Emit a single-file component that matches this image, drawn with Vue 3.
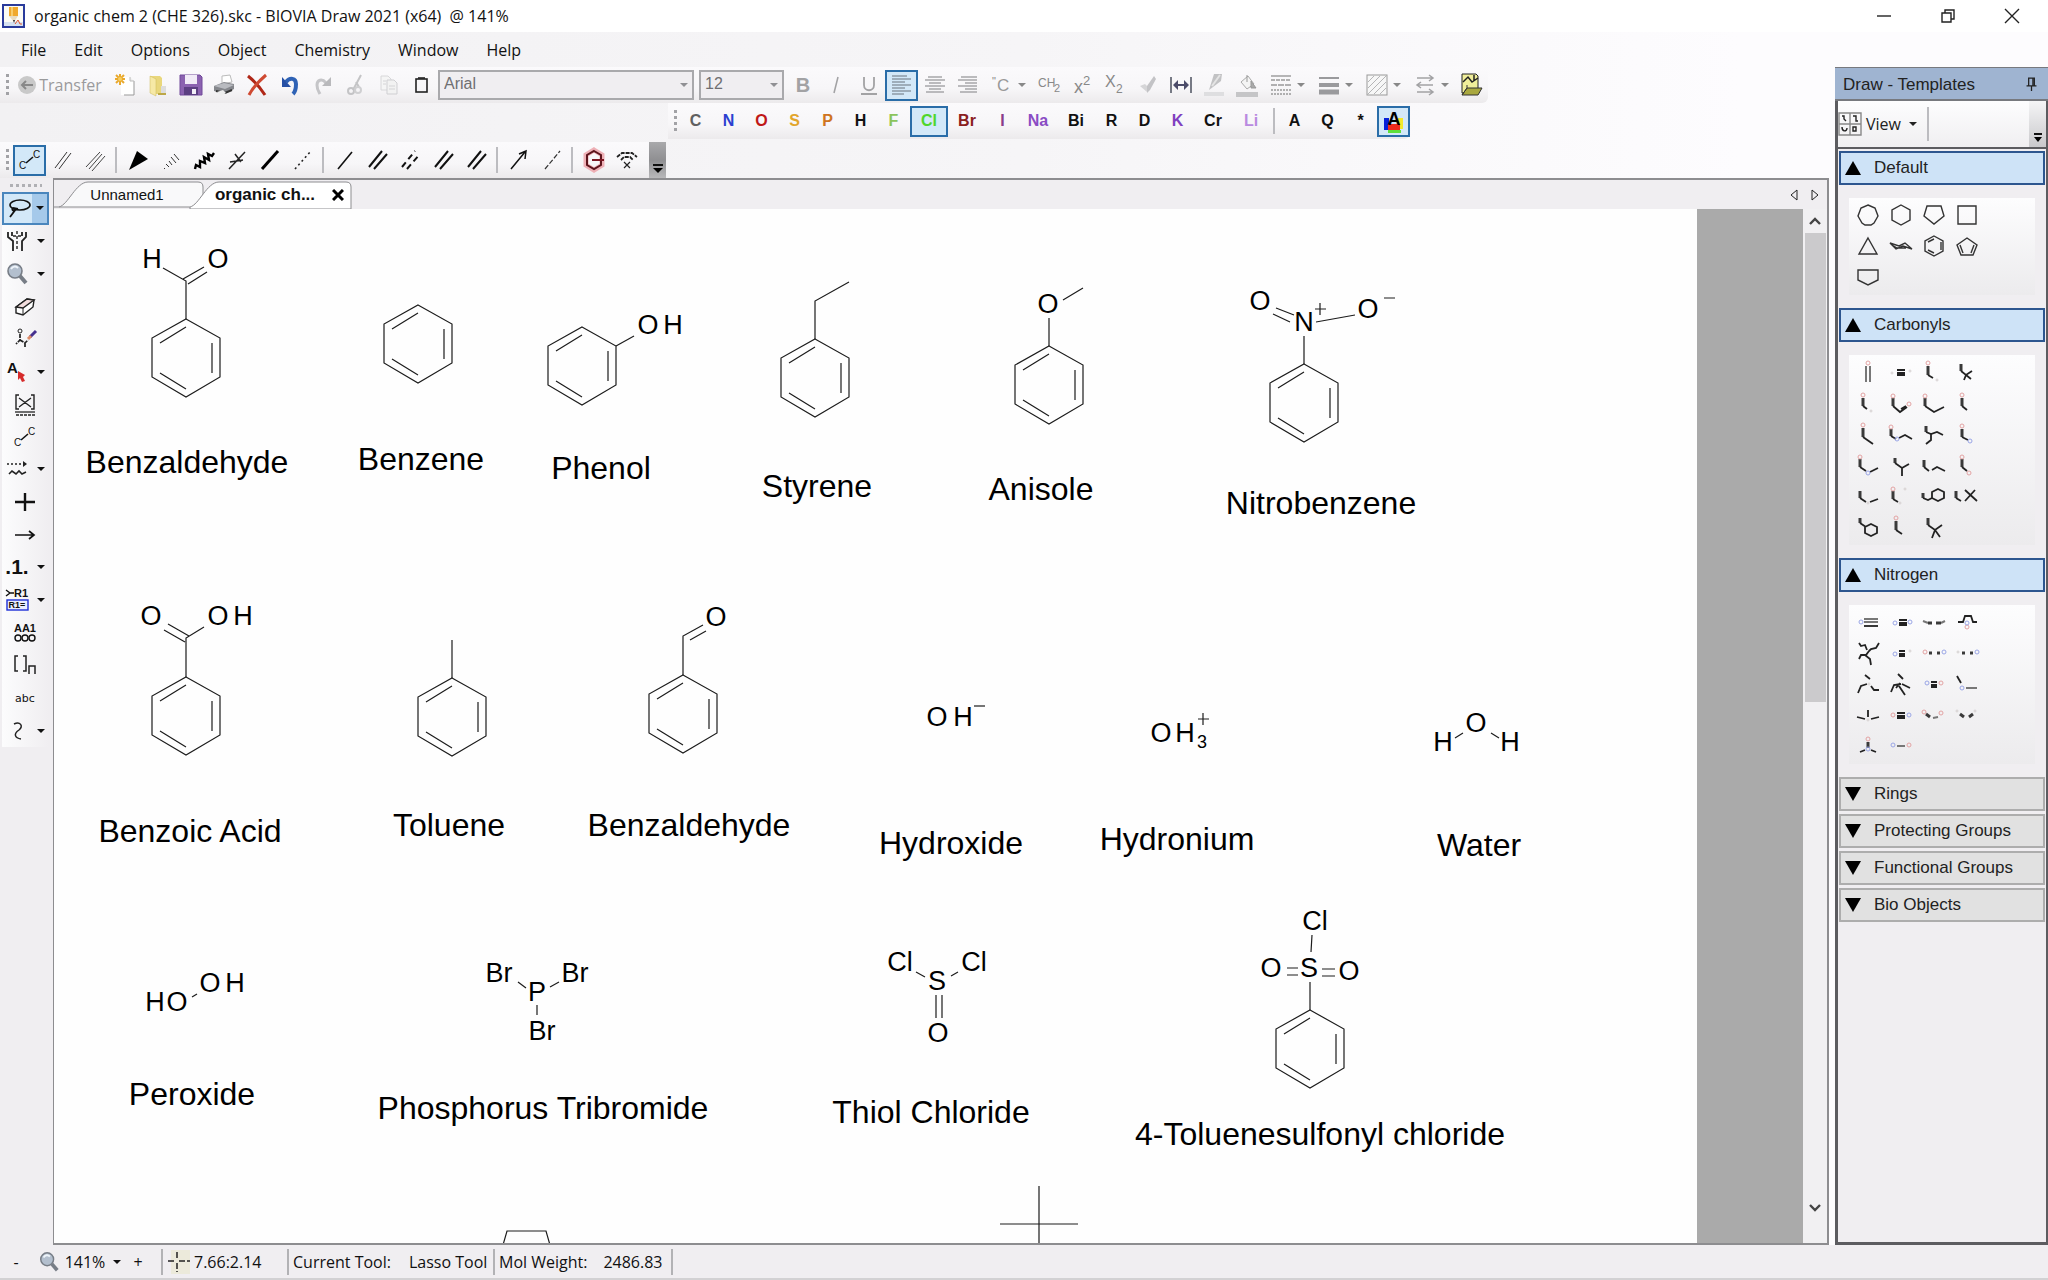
<script setup>
const menus = ['File', 'Edit', 'Options', 'Object', 'Chemistry', 'Window', 'Help']

const arrowDown = '<path d="M0 0H8L4 4Z" fill="currentColor"/>'

const icons = {
  app: '<rect x="1" y="1" width="21" height="22" fill="#fbfbf4" stroke="#2a3b9b" stroke-width="2"/><path d="M2 18H21V22H2Z" fill="#d6e2f0"/><path d="M7 3H16V12H7Z" fill="#f0a92c"/><path d="M9 3H11V12H9Z" fill="#f8cd6c"/><path d="M7 12H16L12 18Z" fill="#e8dcc0"/><path d="M11 16L13 16L12 19Z" fill="#333"/><path d="M13 20L16 16L18 20H20" stroke="#e0562e" fill="none"/>',
  transfer: '<circle cx="12" cy="12" r="9" fill="#c9c9c9"/><path d="M18 12H7M11 8L7 12L11 16" stroke="#888" stroke-width="2" fill="none"/>',
  new: '<path d="M8 4H17L21 8V22H8Z" fill="#fff"/><path d="M21 8V22H11" stroke="#999" fill="none"/><path d="M17 4V8H21" stroke="#bbb" fill="#eee"/><path d="M7 1V12M2 6H12M3 2L11 10M11 2L3 10" stroke="#e9a92e" stroke-width="2"/><circle cx="7" cy="6" r="2" fill="#f7cf63"/>',
  open: '<path d="M4 3H14L16 5V21H9L4 19Z" fill="#e9d77c"/><path d="M4 3L10 6V23L4 20Z" fill="#f6e9a6" stroke="#cdb85a" stroke-width=".5"/><path d="M15 13H20V20H15Z" fill="#ddd"/><path d="M12 21H20" stroke="#bda848" stroke-width="2"/>',
  save: '<path d="M1 2H21L23 4V22H1Z" fill="#8b62b0" stroke="#70489a"/><rect x="6" y="2" width="12" height="9" fill="#f1ebf7"/><rect x="5" y="14" width="14" height="8" fill="#5c3f82"/><rect x="13" y="16" width="4" height="5" fill="#f3f0f8"/>',
  print: '<path d="M10 3L18 2L20 9L10 11Z" fill="#fff" stroke="#bbb"/><path d="M2 13L12 9L22 11V16L13 21L2 18Z" fill="#85878c"/><path d="M2 13L12 10L22 12L13 16Z" fill="#b9bbc0"/><path d="M4 18L13 20L20 17" stroke="#333" stroke-width="2" fill="none"/><path d="M5 19L11 17L14 20L9 23Z" fill="#eee"/>',
  delete: '<path d="M3 3C8 7 15 14 20 22" stroke="#b02717" stroke-width="3" fill="none"/><path d="M21 2C14 8 8 14 4 22" stroke="#cf4a32" stroke-width="3" fill="none"/>',
  undo: '<path d="M8 9C12 4 18 5 18 11C18 16 17 19 15 21" stroke="#2f62b5" stroke-width="4" fill="none"/><path d="M4 4V14H13Z" fill="#2650a5"/>',
  redo: '<path d="M15 10C11 5 6 7 6 12C6 17 8 19 9 21" stroke="#c5c5c8" stroke-width="3" fill="none"/><path d="M20 4V13H11Z" fill="#b9b9bc"/>',
  cut: '<path d="M17 2L9 17M12 9L15 14" stroke="#c4c4c6" stroke-width="2"/><circle cx="7" cy="18" r="3" fill="none" stroke="#c4c4c6" stroke-width="2"/><circle cx="14" cy="17" r="3" fill="none" stroke="#cfcfd1" stroke-width="2"/>',
  copy: '<path d="M4 3H11L14 6V17H4Z" fill="#f5f5f5" stroke="#d8d8da"/><path d="M10 7H17L20 10V21H10Z" fill="#f2f2f2" stroke="#cfcfd2"/><path d="M12 13H18M12 16H18M6 8H9M6 11H9" stroke="#d4d4d6"/>',
  paste: '<rect x="6" y="6" width="11" height="13" fill="none" stroke="#222" stroke-width="1.6"/><path d="M8 5H15" stroke="#222" stroke-width="1.6"/>',
  bold: '<text x="12" y="19" font-size="20" font-weight="bold" text-anchor="middle" fill="#a2a2a4">B</text>',
  italic: '<path d="M14 4L10 20" stroke="#a2a2a4" stroke-width="1.5"/>',
  underline: '<path d="M7 4V12C7 19 17 19 17 12V4M4 21H20" stroke="#a2a2a4" stroke-width="1.8" fill="none"/>',
  left: '<path d="M2 3H17M2 6H21M2 9H15M2 12H21M2 15H15M2 18H21M2 21H14" stroke="#8d99a5" stroke-width="1.4"/>',
  center: '<path d="M5 4H19M2 7H22M6 10H18M2 13H22M6 16H18M3 19H21" stroke="#a7a7a9" stroke-width="1.4"/>',
  right: '<path d="M5 4H21M2 7H21M9 10H21M2 13H21M9 16H21M4 19H21" stroke="#a7a7a9" stroke-width="1.4"/>',
  degree: '<text x="2" y="12" font-size="11" fill="#888">"</text><text x="7" y="18" font-size="17" fill="#999">C</text>',
  ch2: '<text x="1" y="14" font-size="12" fill="#888">CH</text><text x="17" y="19" font-size="11" fill="#888">2</text>',
  sup: '<text x="4" y="20" font-size="18" fill="#888">x</text><text x="13" y="12" font-size="13" fill="#888">2</text>',
  sub: '<text x="2" y="14" font-size="16" fill="#888">X</text><text x="13" y="20" font-size="12" fill="#888">2</text>',
  brush: '<path d="M4 13L9 11L13 15L11 19Z" fill="#d5d5d7"/><path d="M11 13L18 3L20 6L14 17L11 20Z" fill="#c3c3c6"/>',
  width: '<path d="M2 4V20M22 4V20" stroke="#777a85" stroke-width="2"/><path d="M5 12H19" stroke="#4c4c6a" stroke-width="2"/><path d="M9 7V17L4 12ZM15 7V17L20 12Z" fill="#4c4c6a"/>',
  pen: '<path d="M12 1H20L19 8L11 14L7 17Z" fill="#c2c2c4"/><path d="M18 2L10 13" stroke="#e4e4e4" stroke-width="2"/><rect x="2" y="19" width="20" height="4" fill="#dedee0"/>',
  fill: '<path d="M6 9L13 3L19 11L12 16Z" fill="#f4f4f4" stroke="#aaa"/><path d="M12 2V9M16 8L21 15H16Z" stroke="#999" fill="#aaa"/><rect x="1" y="19" width="22" height="5" fill="#c5c5c7"/>',
  dashes: '<path d="M2 3H22" stroke="#999" stroke-width="1.4"/><path d="M2 7H22" stroke="#999" stroke-width="1.4" stroke-dasharray="4 1"/><path d="M2 12H22" stroke="#999" stroke-width="1.6" stroke-dasharray="6 1"/><path d="M2 17H22M2 21H22" stroke="#999" stroke-width="1.6" stroke-dasharray="2 1"/>',
  weights: '<path d="M2 5H22" stroke="#9a9a9d" stroke-width="2"/><path d="M2 12H22" stroke="#9a9a9d" stroke-width="4"/><path d="M2 19H22" stroke="#9a9a9d" stroke-width="5"/>',
  hatch: '<rect x="2" y="2" width="20" height="20" fill="#f7f7f7" stroke="#999"/><path d="M3 9L9 3M3 15L15 3M3 21L21 3M9 21L21 9M15 21L21 15" stroke="#b5b5b7"/>',
  arrows: '<path d="M4 5H20M16 2L20 5L16 8M4 12H20M4 19H20M16 16L20 19L16 22M8 9L4 12L8 15" stroke="#a2a2a4" stroke-width="1.5" fill="none"/>',
  folder: '<path d="M2 1H16L18 3V20H2Z" fill="#f0ee9a" stroke="#222"/><path d="M3 9L8 4L12 9L18 5M14 2V8" stroke="#222" fill="none" stroke-width="1.5"/><path d="M7 15H22L18 22H2Z" fill="#a9a83f" stroke="#333"/><path d="M2 22L7 15V12" stroke="#333" fill="none"/>',
  bond: '<path d="M8 15L15 9" stroke="#111" stroke-width="1.6"/><text x="1" y="21" font-size="10" fill="#111">C</text><text x="15" y="10" font-size="10" fill="#111">C</text>',
  double: '<path d="M4 20L16 4M8 21L20 5" stroke="#333"/>',
  triple: '<path d="M2 19L16 4M5 21L18 6M8 23L21 8" stroke="#444"/>',
  wedge: '<path d="M3 22L11 3L22 11Z" fill="#000"/>',
  hash: '<path d="M5 20L6 21M7 16L10 19M10 13L13 17M12 9L17 15M15 6L20 12" stroke="#333"/>',
  wavy: '<path d="M3 21L4 17L8 19L8 13L13 15L12 9L17 12L16 6L20 8L22 5" stroke="#000" stroke-width="2.4" fill="none"/>',
  either: '<path d="M4 21L20 4M10 6L16 14M5 14L18 12" stroke="#222" stroke-width="1.5"/>',
  boldbond: '<path d="M4 21L20 3" stroke="#000" stroke-width="3"/>',
  dotted: '<path d="M4 21L20 3" stroke="#222" stroke-width="1.6" stroke-dasharray="2 3"/>',
  single: '<path d="M5 21L19 4" stroke="#111" stroke-width="1.6"/>',
  dbl: '<path d="M3 19L16 3M8 21L21 6" stroke="#111" stroke-width="2"/>',
  dbldash: '<path d="M3 19L16 3M8 21L21 6" stroke="#111" stroke-width="2" stroke-dasharray="6 4"/>',
  dative: '<path d="M4 21L18 4M12 6L19 3L18 11" stroke="#111" stroke-width="1.5" fill="none"/>',
  hbond: '<path d="M5 21L20 3" stroke="#333" stroke-width="1.2" stroke-dasharray="5 2"/>',
  ring: '<path d="M12 2L20 7V17L12 22L4 17V7Z" fill="none" stroke="#eeb0b6" stroke-width="5"/><path d="M12 3L19 7V17L12 21L5 17V7Z" fill="none" stroke="#5c141c" stroke-width="2"/><path d="M10 12H22" stroke="#7c1722" stroke-width="2"/>',
  scan: '<path d="M2 9L7 5H17L22 9M6 12L9 9H15L18 12" stroke="#222" stroke-width="1.8" fill="none" stroke-dasharray="4 1"/><path d="M9 14L15 20M15 14L9 20" stroke="#222" stroke-width="1.2"/>',
  colorA: '<path d="M2 9H7V21H2Z" fill="#0620d8"/><path d="M16 9H21V20H16Z" fill="#f4e82a"/><path d="M6 15H18V22H6Z" fill="#ee2b1c"/><path d="M6 21H19V24H6Z" fill="#5fe03a"/><text x="12" y="16" font-size="18" font-weight="bold" text-anchor="middle" fill="#000">A</text>',
  lasso: '<ellipse cx="14" cy="9" rx="10" ry="5" fill="none" stroke="#111" stroke-width="1.6"/><path d="M7 12C5 14 8 16 10 13L4 21M7 12L12 13" fill="none" stroke="#111" stroke-width="1.8"/>',
  flask: '<path d="M3 3V8L8 12V22M7 3V7M21 3V8L17 12V22M17 3V7" stroke="#222" stroke-width="1.8" fill="none"/><path d="M12 2V22" stroke="#222" stroke-width="1.4" stroke-dasharray="3 2"/><path d="M8 7H16" stroke="#222" stroke-width="1.6" stroke-dasharray="3 2"/>',
  magnify: '<circle cx="10" cy="9" r="7" fill="#b3bfce" stroke="#777d86" stroke-width="1.6"/><path d="M6 7C8 4 11 4 13 6" stroke="#eef4fa" stroke-width="2" fill="none"/><path d="M15 14L21 21" stroke="#777d86" stroke-width="4"/>',
  eraser: '<path d="M3 13L14 5L21 6L20 13L10 21L3 19Z" fill="#fff" stroke="#222" stroke-width="1.4"/><path d="M3 13L14 5L21 6L10 14Z" fill="#f3dede" stroke="#222" stroke-width="1.4"/><path d="M10 14V21" stroke="#222"/>',
  paint: '<circle cx="7" cy="4" r="2" fill="none" stroke="#222"/><path d="M7 7V13L3 17M7 13L12 16L15 13M12 16V21" stroke="#222" stroke-width="1.7" stroke-dasharray="4 1" fill="none"/><path d="M17 10L23 4" stroke="#46308f" stroke-width="3"/><path d="M15 12L18 9" stroke="#dd8a66" stroke-width="3"/>',
  label: '<text x="2" y="13" font-size="15" font-weight="bold" fill="#111">A</text><path d="M13 11L20 15L18 17L20 21L17 22L15 18L13 20Z" fill="#d62b2b"/>',
  box: '<path d="M6 3H3V17H6M18 3H21V17H18M6 6L18 15M18 6L6 15" stroke="#222" stroke-width="1.4" fill="none"/><path d="M2 20H22" stroke="#222" stroke-width="1.3"/><path d="M3 23H22" stroke="#222" stroke-width="1.6" stroke-dasharray="3 1"/>',
  reaction: '<path d="M2 7H19" stroke="#222" stroke-width="1.6" stroke-dasharray="2 2"/><path d="M18 4L22 7L18 10Z" fill="#222"/><path d="M4 17L7 14L11 17L14 14L17 17L21 15" stroke="#222" stroke-width="1.6" fill="none"/>',
  plus: '<path d="M12 3V21M2 12H22" stroke="#111" stroke-width="2.4"/>',
  arrow: '<path d="M2 12H21M16 8L21 12L16 16" stroke="#111" stroke-width="1.7" fill="none"/>',
  one: '<text x="12" y="19" font-size="21" font-weight="bold" text-anchor="middle" fill="#111">.1.</text>',
  rgroup: '<text x="23" y="9" font-size="11" font-weight="bold" text-anchor="end" fill="#111">R1</text><path d="M1 2L5 5L1 8M5 5H9" stroke="#111" fill="none" stroke-width="1.4"/><rect x="2" y="12" width="21" height="10" fill="#e8ecff" stroke="#1e2fd8" stroke-width="1.4"/><text x="12" y="20" font-size="9" font-weight="bold" text-anchor="middle" fill="#111">R1=</text>',
  aa: '<text x="12" y="11" font-size="11" font-weight="bold" text-anchor="middle" fill="#111">AA1</text><g fill="none" stroke="#111" stroke-width="1.4"><circle cx="5" cy="17" r="3"/><circle cx="12" cy="17" r="3"/><circle cx="19" cy="17" r="3"/></g>',
  bracket: '<path d="M5 3H2V18H5M10 3H13V18H10M16 21V13H22V21" stroke="#222" stroke-width="1.5" fill="none"/>',
  abc: '<text x="12" y="16" font-size="11" text-anchor="middle" font-family="DejaVu Sans, sans-serif" fill="#111">abc</text>',
  curve: '<path d="M9 5C15 2 19 7 14 11C8 15 10 19 16 20" stroke="#222" stroke-width="1.5" fill="none"/>',
  pin: '<path d="M8 3H16V14H8ZM14 3V14M5 14H19M12 14V21" stroke="#222" stroke-width="1.8" fill="none"/>',
  view: '<path d="M1 1H23V23H1ZM12 1V23M1 12H23" stroke="#888" fill="none" stroke-width="1.4"/><path d="M4 4H6V7L8 9M15 4H18V9H20M4 15C4 20 9 20 9 16M15 15H18V19H15Z" stroke="#222" fill="none" stroke-width="1.4"/>',
  cross: '<rect x="4" y="0" width="19" height="24" fill="#eceadb"/><path d="M10 2V9M10 13V22M1 11H8M12 11H23" stroke="#222" stroke-width="1.5" stroke-dasharray="6 2"/>',
}

const fileTools = ['new', 'open', 'save', 'print', 'delete', 'undo', 'redo', 'cut', 'copy', 'paste']
const formatTools = [
  { i: 'bold' }, { i: 'italic' }, { i: 'underline' }, { i: 'left', on: true }, { i: 'center' }, { i: 'right' },
  { i: 'degree', drop: true }, { i: 'ch2' }, { i: 'sup' }, { i: 'sub' }, { i: 'brush' }, { i: 'width' }, { i: 'pen' }, { i: 'fill' },
  { i: 'dashes', drop: true }, { i: 'weights', drop: true }, { i: 'hatch', drop: true }, { i: 'arrows', drop: true }, { i: 'folder' },
]
const elements = [
  ['C', '#606060'], ['N', '#2b3fd0'], ['O', '#c01818'], ['S', '#e2a52c'], ['P', '#cf7420'], ['H', '#111'], ['F', '#8cc45c'],
  ['Cl', '#4fd62c', true], ['Br', '#8a2020'], ['I', '#8a3c8a'], ['Na', '#8a4cc4'], ['Bi', '#111'], ['R', '#111'], ['D', '#111'],
  ['K', '#8040c0'], ['Cr', '#111'], ['Li', '#b98ae0'],
]
const queryAtoms = ['A', 'Q', '*']
const bondTools = [
  ['bond', 'double', 'triple'],
  ['wedge', 'hash', 'wavy', 'either', 'boldbond', 'dotted'],
  ['single', 'dbl', 'dbldash', 'dbl', 'dbl'],
  ['dative', 'hbond'],
  ['ring', 'scan'],
]
const sideTools = [
  { i: 'lasso', drop: true, on: true }, { i: 'flask', drop: true }, { i: 'magnify', drop: true }, { i: 'eraser' }, { i: 'paint' },
  { i: 'label', drop: true }, { i: 'box' }, { i: 'bond' }, { i: 'reaction', drop: true }, { i: 'plus' }, { i: 'arrow' },
  { i: 'one', drop: true }, { i: 'rgroup', drop: true }, { i: 'aa' }, { i: 'bracket' }, { i: 'abc' }, { i: 'curve', drop: true },
]

// Template glyphs: t = heavy bond, k = thin bond, g = faint bond; r / b / f = red, blue and faint atoms.
const hex = (x, y) => `M${x} ${y - 6}L${x + 6} ${y - 3}V${y + 3}L${x} ${y + 6}L${x - 6} ${y + 3}V${y - 3}Z`
const bars = (a, b) => `M${a} 13H${b}M${a} 16H${b}M${a} 18H${b}`
const groups = [
  {
    name: 'Default', items: [
      { o: 'M16 5L23 8L26 16L22 23L19 25H13L10 23L6 16L9 8Z' },
      { o: 'M16 5L25 10V20L16 25L7 20V10Z' },
      { o: 'M9 6H23L26 16L16 24L6 16Z' },
      { o: 'M7 6H25V24H7Z' },
      { o: 'M16 7L25 23H7Z' },
      { o: 'M5 12L14 15L20 12L27 18L18 15L11 18ZM7 14L12 17L21 17' },
      { o: 'M16 5L25 10V20L16 25L7 20V10ZM10 11L16 8M23 11V19M10 19L16 22' },
      { o: 'M16 7L26 14L22 24H10L6 14ZM9 14L12 22M23 14L20 22' },
      { o: 'M6 8H26V18L16 23L6 18Z' },
    ],
  },
  {
    name: 'Carbonyls', items: [
      { g: 'M14 9V25M18 9V25', r: [[16, 6]] },
      { k: bars(12, 20), f: [[7, 16], [25, 14]] },
      { t: 'M10 9V18', k: 'M10 18L15 21', r: [[10, 6]], f: [[19, 23]] },
      { t: 'M10 7V14', k: 'M10 14L15 18L21 14M15 18L13 23M15 18L20 22' },
      { t: 'M11 10V18', k: 'M11 18L15 21', r: [[11, 7]], f: [[19, 23]] },
      { t: 'M8 10V18', k: 'M8 18L15 24L22 19M16 21L21 18', r: [[8, 8], [24, 16]] },
      { t: 'M7 10V18', k: 'M7 18L16 24L26 19', r: [[7, 8]] },
      { t: 'M11 10V18', k: 'M11 18L16 22', r: [[11, 7]] },
      { t: 'M11 9V18', k: 'M11 18L21 25', r: [[11, 6]] },
      { t: 'M6 10V17', k: 'M6 17L11 20M14 19L20 16L27 20', r: [[6, 8]], b: [[12, 20]] },
      { t: 'M8 7V13', k: 'M8 13L13 15L19 13L25 16M13 15V21L8 25' },
      { t: 'M11 10V18', k: 'M11 18L17 21', r: [[11, 7]], b: [[19, 22]] },
      { t: 'M8 9V17', k: 'M8 17L14 21M18 22L26 18', r: [[8, 7]], b: [[16, 23]] },
      { t: 'M10 8V13', k: 'M10 13L17 18L24 14M17 18V26' },
      { t: 'M6 10V17', k: 'M6 17L11 21M14 20L19 17L27 21' },
      { t: 'M11 9V17', k: 'M11 17L16 21', r: [[11, 7], [18, 23]] },
      { t: 'M8 10V17', k: 'M8 17L14 21M18 21L26 18', f: [[16, 22]] },
      { t: 'M8 10V18', k: 'M8 18L13 21', r: [[8, 8]], f: [[15, 22], [20, 8]] },
      { t: 'M5 12V17', k: 'M5 17L10 19L14 17' + hex(20, 14) },
      { t: 'M5 10V17', k: 'M5 17L10 20M14 9L26 20M24 9L14 20' },
      { t: 'M8 6V11', k: 'M8 11L14 15' + hex(19, 18) },
      { t: 'M11 9V18', k: 'M11 18L17 22', r: [[11, 6]] },
      { t: 'M10 6V13', k: 'M10 13L17 18L24 13M17 18L14 26M17 18L22 25' },
    ],
  },
  {
    name: 'Nitrogen', items: [
      { k: 'M12 19H26', g: 'M12 12H26M12 15H26', b: [[9, 15]] },
      { k: bars(14, 22), b: [[10, 16], [25, 15]] },
      { t: 'M10 16H14M18 16H23', g: 'M5 14L10 16M23 16L27 14' },
      { k: 'M7 15H12L14 9H20L22 15H26', b: [[16, 16]], r: [[16, 20]] },
      { k: 'M7 5L9 8L13 7L15 12M17 13L19 11L24 10L27 5M17 13L14 17L9 17L7 21M13 17L18 21L19 27' },
      { k: bars(14, 20), b: [[10, 16]], f: [[25, 13]] },
      { t: 'M11 15H14M19 15H22', r: [[7, 14]], b: [[26, 14]] },
      { t: 'M11 15H14M19 15H22', f: [[7, 14]], b: [[26, 14]] },
      { k: 'M13 6L18 10M15 15L9 17L6 24M19 17L22 21L27 21', f: [[17, 15]] },
      { k: 'M13 5L18 10M16 15L9 16L6 23M17 15L25 19M14 17L20 26M11 19L15 14' },
      { k: bars(13, 19), b: [[9, 14]], r: [[23, 14]] },
      { k: 'M6 7L10 14', g: 'M15 19H26', b: [[11, 19]] },
      { k: 'M16 10V17M5 17L13 19M19 19L27 17', f: [[16, 20]] },
      { k: bars(12, 20), r: [[8, 15]], b: [[24, 15]] },
      { t: 'M8 14L12 17', g: 'M15 18L20 17', r: [[6, 12], [23, 13]] },
      { t: 'M9 14L13 17M18 17L22 14', f: [[6, 11], [24, 11]] },
      { t: 'M16 11V17', k: 'M13 19L8 21M19 19L24 21', r: [[16, 8]], b: [[16, 18]] },
      { g: 'M12 15H20', b: [[8, 14]], r: [[24, 14]] },
    ],
  },
  { name: 'Rings' }, { name: 'Protecting Groups' }, { name: 'Functional Groups' }, { name: 'Bio Objects' },
]

const ringPath = 'M0-39L34-20V19L0 39L-34 19V-20ZM26-15V15M-26-15L0-31M-26 15L0 31'

// Molecules on the sheet: ring centres, bond paths, atom symbols [text, x, baseline] and caption.
const molecules = [
  { ring: [132, 149], bonds: 'M132 110V72L109 59M129 70L150 58M134 75L153 63', atoms: [['H', 98, 59], ['O', 164, 59]], name: ['Benzaldehyde', 133, 264] },
  { ring: [364, 135], name: ['Benzene', 367, 261] },
  { ring: [528, 157], bonds: 'M562 137L580 127', atoms: [['O', 594, 125], ['H', 619, 125]], name: ['Phenol', 547, 270] },
  { ring: [761, 169], bonds: 'M761 130V92L795 73', name: ['Styrene', 763, 288] },
  { ring: [995, 176], bonds: 'M995 137V109M1009 91L1029 79', atoms: [['O', 994, 104]], name: ['Anisole', 987, 291] },
  { ring: [1250, 194], bonds: 'M1250 155V127M1222 99L1240 106M1219 105L1236 113M1262 113L1301 106M1261 100H1272M1266 94V106M1330 89H1341', atoms: [['O', 1206, 101], ['N', 1250, 122], ['O', 1314, 109]], name: ['Nitrobenzene', 1267, 305] },
  { ring: [132, 507], bonds: 'M132 468V429L150 418M114 415L135 427M110 421L131 433', atoms: [['O', 97, 416], ['O', 164, 416], ['H', 189, 416]], name: ['Benzoic Acid', 136, 633] },
  { ring: [398, 508], bonds: 'M398 469V431', name: ['Toluene', 395, 627] },
  { ring: [629, 505], bonds: 'M629 466V427L649 416M636 431L652 422', atoms: [['O', 662, 417]], name: ['Benzaldehyde', 635, 627] },
  { bonds: 'M920 497H931', atoms: [['O', 883, 517], ['H', 909, 517]], name: ['Hydroxide', 897, 645] },
  { bonds: 'M1144 510H1155M1149 504V516', atoms: [['O', 1107, 533], ['H', 1131, 533], ['3', 1148, 539, true]], name: ['Hydronium', 1123, 641] },
  { bonds: 'M1401 529L1409 524M1437 524L1445 529', atoms: [['H', 1389, 542], ['O', 1422, 523], ['H', 1456, 542]], name: ['Water', 1425, 647] },
  { bonds: 'M138 788L143 785', atoms: [['H', 101, 802], ['O', 123, 802], ['O', 156, 783], ['H', 181, 783]], name: ['Peroxide', 138, 896] },
  { bonds: 'M464 773L472 779M496 778L505 773M483 796V806', atoms: [['Br', 445, 773], ['Br', 521, 773], ['P', 483, 792], ['Br', 488, 831]], name: ['Phosphorus Tribromide', 489, 910] },
  { bonds: 'M862 763L871 768M897 767L904 763M882 786V809M888 786V809', atoms: [['Cl', 846, 762], ['Cl', 920, 762], ['S', 883, 781], ['O', 884, 833]], name: ['Thiol Chloride', 877, 914] },
  { ring: [1256, 840], bonds: 'M1256 801V773M1258 726L1257 743M1233 759H1244M1233 766H1244M1268 760H1281M1268 767H1281', atoms: [['Cl', 1261, 721], ['S', 1255, 768], ['O', 1217, 768], ['O', 1295, 771]], name: ['4-Toluenesulfonyl chloride', 1266, 936] },
]
</script>

<template>
  <div class="app">
    <header class="titlebar">
      <svg class="ico" viewBox="0 0 24 24" v-html="icons.app"></svg>
      <h1>organic chem 2 (CHE 326).skc - BIOVIA Draw 2021 (x64)&nbsp; @ 141%</h1>
      <div class="winbtns">
        <button aria-label="Minimize"><svg width="16" height="16"><path d="M1 8H15" /></svg></button>
        <button aria-label="Restore"><svg width="16" height="16"><path d="M2 5H11V14H2ZM5 5V2H14V11H11" /></svg></button>
        <button aria-label="Close"><svg width="16" height="16"><path d="M1 1L15 15M15 1L1 15" /></svg></button>
      </div>
    </header>

    <div class="main">
      <div class="left">
        <nav class="menu"><button v-for="m in menus" :key="m">{{ m }}</button></nav>

        <div class="bar standard">
          <i class="grip"></i>
          <button class="transfer"><svg class="ico" viewBox="0 0 24 24" v-html="icons.transfer"></svg>Transfer</button>
          <button v-for="t in fileTools" :key="t" class="tool" :aria-label="t"><svg class="ico" viewBox="0 0 24 24" v-html="icons[t]"></svg></button>
          <div class="combo face"><select aria-label="Font"><option>Arial</option></select></div>
          <div class="combo size"><select aria-label="Font size"><option>12</option></select></div>
          <button v-for="t in formatTools" :key="t.i" class="tool" :class="{ on: t.on, drop: t.drop }" :aria-label="t.i">
            <svg class="ico" viewBox="0 0 24 24" v-html="icons[t.i]"></svg>
            <svg v-if="t.drop" class="tri" width="8" height="4" v-html="arrowDown"></svg>
          </button>
        </div>

        <div class="bar atoms">
          <i class="grip"></i>
          <button v-for="e in elements" :key="e[0]" class="tool" :class="{ on: e[2], wide: e[0].length > 1 }" :style="{ color: e[1] }">{{ e[0] }}</button>
          <i class="sep"></i>
          <button v-for="q in queryAtoms" :key="q" class="tool">{{ q }}</button>
          <button class="tool on" aria-label="Color atoms"><svg class="ico" viewBox="0 0 24 24" v-html="icons.colorA"></svg></button>
        </div>

        <div class="bar bonds">
          <i class="grip"></i>
          <template v-for="(g, n) in bondTools" :key="n">
            <i v-if="n" class="sep"></i>
            <button v-for="(b, k) in g" :key="k" class="tool" :class="{ on: b === 'bond' }" :aria-label="b"><svg class="ico" viewBox="0 0 24 24" v-html="icons[b]"></svg></button>
          </template>
          <button class="overflow" aria-label="More"><svg width="10" height="10"><path d="M0 1H10" stroke="#111" stroke-width="2" /><path d="M0 4H10L5 9Z" /></svg></button>
        </div>

        <div class="work">
          <aside class="side">
            <i class="dots"></i>
            <div class="sidetools">
              <button v-for="t in sideTools" :key="t.i" :class="{ on: t.on, drop: t.drop }" :aria-label="t.i">
                <span class="pic"><svg class="ico" viewBox="0 0 24 24" v-html="icons[t.i]"></svg></span>
                <span v-if="t.drop" class="more"><svg width="8" height="4" v-html="arrowDown"></svg></span>
              </button>
            </div>
          </aside>

          <section class="doc">
            <div class="tabs">
              <svg class="tabshape" height="30" width="300">
                <path class="off" d="M5 28C14 26 22 3 34 3H144Q149 3 149 8V28" />
                <path class="line" d="M0 28H136" />
                <path class="act" d="M136 28C145 26 153 3 165 3H292Q297 3 297 8V28V30H136Z" />
              </svg>
              <button class="tab first">Unnamed1</button>
              <button class="tab second">organic ch...</button>
              <button class="close" aria-label="Close tab"><svg width="12" height="12"><path d="M1 1L11 11M11 1L1 11" /></svg></button>
              <span class="rest"></span>
              <button class="nav" aria-label="Previous tab"><svg width="8" height="12"><path d="M7 1V11L1 6Z" /></svg></button>
              <button class="nav" aria-label="Next tab"><svg width="8" height="12"><path d="M1 1V11L7 6Z" /></svg></button>
            </div>
            <div class="view">
              <div class="sheet">
                <svg class="drawing">
                  <g v-for="(m, n) in molecules" :key="n">
                    <path v-if="m.ring" :d="ringPath" :transform="`translate(${m.ring[0]} ${m.ring[1]})`" />
                    <path v-if="m.bonds" :d="m.bonds" />
                    <text v-for="(a, k) in m.atoms" :key="k" :class="a[3] ? 'index' : 'atom'" :x="a[1]" :y="a[2]">{{ a[0] }}</text>
                    <text class="name" :x="m.name[1]" :y="m.name[2]">{{ m.name[0] }}</text>
                  </g>
                  <path d="M449 1036L453 1022H492L496 1036" />
                  <path d="M985 977V1036M946 1015H1024" />
                </svg>
              </div>
              <div class="beyond"></div>
              <div class="scroll">
                <button aria-label="Scroll up"><svg width="12" height="10"><path d="M1 8L6 3L11 8" /></svg></button>
                <span class="thumb"></span>
                <span class="track"></span>
                <button aria-label="Scroll down"><svg width="12" height="10"><path d="M1 2L6 7L11 2" /></svg></button>
              </div>
            </div>
          </section>
        </div>
      </div>

      <aside class="panel">
        <h2>Draw - Templates<svg class="pin" viewBox="0 0 24 24" v-html="icons.pin"></svg></h2>
        <div class="viewbar">
          <button class="viewbtn"><svg class="ico" viewBox="0 0 24 24" v-html="icons.view"></svg>View<svg width="8" height="4" v-html="arrowDown"></svg></button>
          <i class="sep"></i>
          <button class="overflow light" aria-label="More"><svg width="10" height="10"><path d="M1 1H9" stroke="#111" stroke-width="2" /><path d="M1 4H9L5 9Z" /></svg></button>
        </div>
        <div class="groups">
          <section v-for="g in groups" :key="g.name">
            <button class="ghead" :class="{ open: g.items }">
              <svg width="16" height="14"><path :d="g.items ? 'M0 14L8 0L16 14Z' : 'M0 0L8 14L16 0Z'" /></svg>{{ g.name }}
            </button>
            <div v-if="g.items" class="gbody">
              <svg v-for="(s, n) in g.items" :key="n" viewBox="0 0 32 31" class="tpl">
                <path v-if="s.o" class="o" :d="s.o" />
                <path v-if="s.g" class="g" :d="s.g" />
                <path v-if="s.t" class="t" :d="s.t" />
                <path v-if="s.k" class="k" :d="s.k" />
                <circle v-for="(c, k) in s.f" :key="'f' + k" class="f" :cx="c[0]" :cy="c[1]" r="1" />
                <circle v-for="(c, k) in s.r" :key="'r' + k" class="r" :cx="c[0]" :cy="c[1]" r="2" />
                <circle v-for="(c, k) in s.b" :key="'b' + k" class="b" :cx="c[0]" :cy="c[1]" r="2" />
              </svg>
            </div>
          </section>
        </div>
      </aside>
    </div>

    <footer class="status">
      <button class="zoomstep">-</button>
      <svg class="ico mag" viewBox="0 0 24 24" v-html="icons.magnify"></svg>
      <button class="zoomval">141%<svg width="8" height="4" v-html="arrowDown"></svg></button>
      <button class="zoomstep">+</button>
      <span class="cell pos"><svg class="ico" viewBox="0 0 24 24" v-html="icons.cross"></svg>7.66:2.14</span>
      <span class="cell cur"><span>Current Tool:</span><span>Lasso Tool</span></span>
      <span class="cell mol"><span>Mol Weight:</span><span>2486.83</span></span>
      <i class="cell"></i>
    </footer>
  </div>
</template>

<style>
body { margin: 0; overflow: hidden; }
</style>

<style scoped>
.app { height: 100vh; display: flex; flex-direction: column; font: 16px/20px "Open Sans", "Noto Sans", sans-serif; color: #111; background: linear-gradient(90deg, #f2f1f3, #f6f5f7 50%, #fdfcfe 85%); }
.app *, .app { box-sizing: border-box; }
button { font: inherit; color: inherit; border: 0; padding: 0; margin: 0; background: none; display: flex; align-items: center; justify-content: center; flex: none; }
svg { flex: none; display: block; }
.ico { width: 24px; height: 24px; overflow: visible; font-family: "Liberation Sans", Arial, sans-serif; }

.titlebar { display: flex; align-items: center; height: 32px; background: #fff; padding: 0 4px 0 2px; flex: none; }
h1 { font-size: 16px; font-weight: 400; margin: 0 0 0 8px; white-space: nowrap; }
.winbtns { margin-left: auto; display: flex; }
.winbtns button { width: 64px; height: 32px; }
.winbtns path { stroke: #222; stroke-width: 1.4; fill: none; }

.main { flex: 1; min-height: 0; display: flex; }
.left { flex: 1; min-width: 0; display: flex; flex-direction: column; }
.menu { display: flex; gap: 28px; padding: 0 21px; height: 35px; align-items: center; flex: none; }

.bar { display: flex; align-items: center; align-self: flex-start; flex: none; height: 36px; padding-left: 4px; background: linear-gradient(#fbfafc, #f7f6f8 60%, #eceaec); border-radius: 0 6px 6px 0; }
.grip { width: 3px; height: 22px; margin: 0 4px 0 2px; background: repeating-linear-gradient(#a2a2a6 0 3px, transparent 3px 6px); }
.tool { width: 33px; height: 31px; }
.tool.drop { width: 48px; gap: 4px; color: #888; }
.on { background: #d3e8f8; border: 2px solid #2a6da8; }
.transfer { color: #9a9a9c; margin: 0 7px 0 3px; width: 85px; }
.combo { position: relative; height: 30px; }
.combo.face { width: 256px; margin: 0 5px 0 0; }
.combo.size { width: 85px; margin-right: 2px; }
.combo select { appearance: none; width: 100%; height: 30px; border: 2px solid #a9a9ac; border-radius: 0; background: #f0eef1; color: #6f6f72; font: 16px/20px "Liberation Sans", Arial, sans-serif; padding: 0 4px 2px; }
.combo::after { content: ""; position: absolute; right: 6px; top: 13px; border: 4px solid transparent; border-top-color: #909094; pointer-events: none; }
.atoms { margin-left: 668px; font: bold 16px/20px "Liberation Sans", Arial, sans-serif; }
.atoms .grip { margin-right: 2px; }
.atoms .wide { width: 38px; }
.sep { width: 2px; height: 26px; background: #bcbcc0; margin: 0 4px; }
.atoms .sep { margin: 0 3px; }
.bonds { margin-top: 3px; }
.bonds .sep { margin: 0 4px 0 3px; }
.overflow { width: 17px; height: 36px; margin-left: 6px; align-items: flex-end; padding-bottom: 4px; background: linear-gradient(#a9a9ab, #8f8f92 50%, #b8b8ba); }

.work { flex: 1; min-height: 0; display: flex; }
.side { width: 53px; flex: none; display: flex; flex-direction: column; align-items: flex-start; background: #f0eef1; }
.dots { width: 32px; height: 3px; margin: 6px 0 5px 10px; background: repeating-linear-gradient(90deg, #b0b0b4 0 3px, transparent 3px 6px); }
.sidetools { display: grid; grid-auto-rows: 1fr; height: 555px; width: 47px; margin-left: 2px; background: linear-gradient(90deg, #fcfcfd, #f0eef1); }
.sidetools button { width: 47px; justify-content: flex-start; border: 0; align-items: stretch; }
.pic { width: 46px; display: flex; align-items: center; justify-content: center; }
.drop .pic { width: 30px; }
.more { width: 17px; display: flex; align-items: center; justify-content: center; }
.sidetools .on { border: 2px solid #4a86bd; }
.sidetools .on .pic { width: 28px; }
.sidetools .on .more { width: 15px; background: #a5c9ea; }

.doc { flex: 1; min-width: 0; display: flex; flex-direction: column; border: 1px solid #8d8d90; border-width: 2px 2px 2px 1px; margin-right: 6px; }
.tabs { position: relative; display: flex; align-items: center; height: 29px; flex: none; background: #f0eef1; font: 15px/20px "Liberation Sans", Arial, sans-serif; }
.tabshape { position: absolute; left: 0; top: -1px; }
.tabshape path { fill: none; stroke: #8d8d90; }
.tabshape .off { fill: #f9f9fa; }
.tabshape .act { fill: #fff; }
.tab { position: relative; height: 28px; }
.first { width: 146px; }
.second { width: 124px; font-weight: bold; font-size: 17px; padding-left: 6px; }
.close { position: relative; width: 28px; height: 28px; }
.close path { stroke: #000; stroke-width: 3; }
.rest { flex: 1; align-self: flex-end; }
.nav { width: 21px; height: 28px; }
.nav:last-child { margin-right: 2px; }
.nav path { fill: none; stroke: #222; }
.view { flex: 1; min-height: 0; display: flex; }
.sheet { flex: 1; min-width: 0; background: #fefefe; overflow: hidden; }
.drawing { width: 100%; height: 100%; font-family: "Liberation Sans", Arial, sans-serif; }
.drawing path { fill: none; stroke: #1c1c1c; stroke-width: 1.2; }
.drawing text { text-anchor: middle; fill: #000; }
.atom { font-size: 27px; }
.index { font-size: 18px; }
.name { font-size: 32px; }
.beyond { width: 106px; background: #aaa; flex: none; }
.scroll { width: 24px; flex: none; display: flex; flex-direction: column; align-items: center; background: #f1f0f2; }
.scroll button { height: 24px; }
.scroll button:last-child { height: 70px; }
.scroll path { fill: none; stroke: #444; stroke-width: 2.4; }
.thumb { width: 21px; flex: 470; background: #cbcacc; }
.track { flex: 472; }

.panel { width: 213px; margin-top: 35px; flex: none; display: flex; flex-direction: column; border: 3px solid #5c5c60; border-top: 0; border-right-width: 2px; background: #f0eef1; font: 17px/20px "Liberation Sans", Arial, sans-serif; color: #222; }
h2 { margin: 0 -2px 0 -3px; height: 34px; display: flex; align-items: center; padding: 2px 8px 0 8px; font: inherit; background: #9fb4d1; border: solid #77797e; border-width: 1px 0 2px; }
.pin { width: 17px; height: 17px; margin-left: auto; }
.viewbar { display: flex; align-items: center; height: 48px; background: linear-gradient(#fdfdfe, #f0eff1); border-bottom: 2px solid #5c5c60; flex: none; }
.viewbtn { font: 16px/20px "Open Sans", sans-serif; gap: 4px; }
.viewbtn .ico + svg { margin-left: 4px; }
.viewbar .sep { height: 34px; margin: 0 0 0 10px; }
.overflow.light { margin-left: auto; height: 46px; background: linear-gradient(#f5f5f6, #c9c9cc); }
.groups { padding: 2px 1px 0; display: flex; flex-direction: column; gap: 3px; }
.ghead { width: 100%; height: 34px; justify-content: flex-start; gap: 13px; padding-left: 4px; background: #e1e1e1; border: 2px solid #adadad; }
.ghead.open { background: #cee3f7; border-color: #2d568f; }
.gbody { margin: 13px 10px 10px; padding: 2px 3px; display: grid; grid-template-columns: repeat(4, 33px); grid-auto-rows: 31px; background: linear-gradient(#fdfdfe, #ecebed); }
.tpl { width: 32px; height: 31px; }
.tpl path { fill: none; }
.o { stroke: #333; stroke-width: 1.4; }
.g { stroke: #777; stroke-width: 2; }
.t { stroke: #3a3a3a; stroke-width: 3; }
.k { stroke: #222; stroke-width: 1.8; }
.tpl circle { fill: none; }
.f { stroke: #d5d0d0; }
.r { stroke: #e3a3a3; }
.b { stroke: #9aa6e6; }

.status { flex: none; height: 35px; display: flex; align-items: center; background: #f0eef1; border-bottom: 2px solid #d2d1d3; font-size: 16px; }
.zoomstep { width: 32px; }
.mag { width: 22px; margin: 0 4px 0 6px; }
.zoomval { gap: 8px; width: 58px; }
.status .cell { display: flex; align-items: center; height: 26px; border-left: 2px solid #b2b2b5; padding-left: 4px; white-space: nowrap; }
.zoomstep + .cell { margin-left: 7px; }
.pos { width: 126px; gap: 3px; }
.cur { width: 206px; gap: 18px; }
.mol { width: 178px; gap: 16px; }
</style>
